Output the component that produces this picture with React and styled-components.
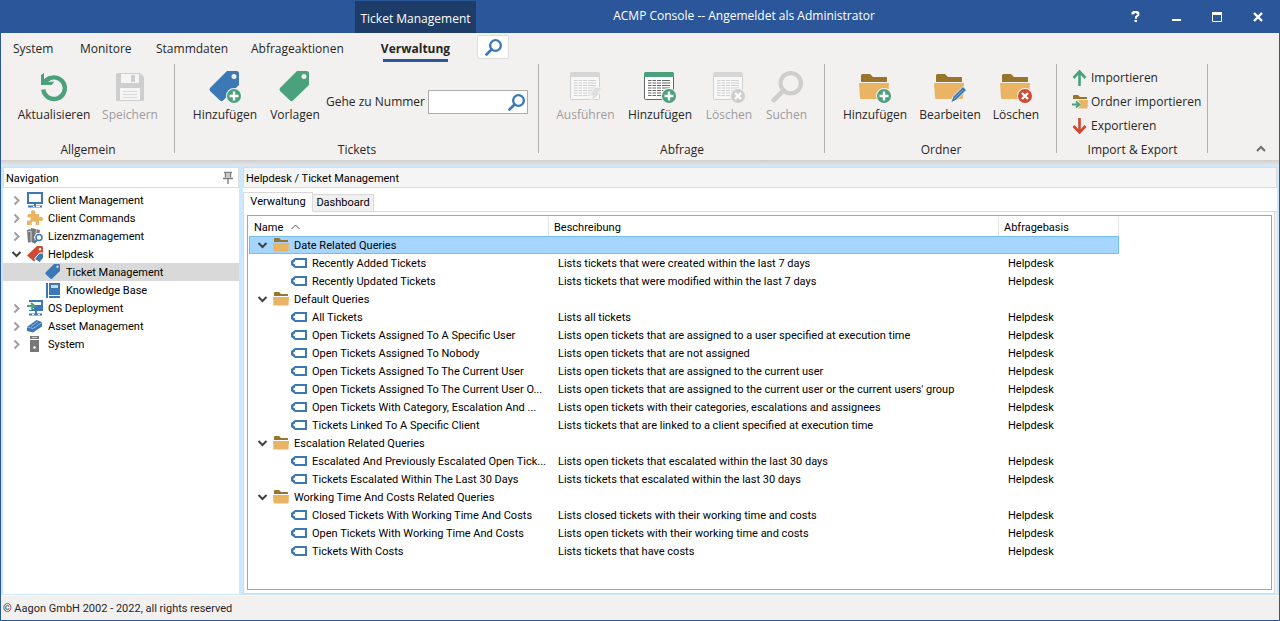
import React from "react";
import styled, { createGlobalStyle, css } from "styled-components";

const ui = `"Open Sans", "Noto Sans", sans-serif`;
const list = `Roboto, "Open Sans", sans-serif`;

const C = {
  title: "#2b579a",
  titleDark: "#1e3c68",
  chrome: "#f3f1f0",
  blue: "#3c77b6",
  green: "#4ba17c",
  red: "#cf4a30",
  folder: "#e9b564",
  folderDark: "#98752a",
  gray: "#cecece",
  text: "#262626",
};

const Global = createGlobalStyle`
  * { box-sizing: border-box; }
  html, body { margin: 0; padding: 0; }
  body { font: 12px/16px ${ui}; color: ${C.text}; background: #fff; }
  button { font: inherit; color: inherit; background: none; border: 0; padding: 0; margin: 0; }
  ul { list-style: none; margin: 0; padding: 0; }
  svg { display: block; flex: none; }
`;

const Window = styled.div`
  min-height: 100vh;
  display: flex;
  flex-direction: column;
  border: solid ${C.title};
  border-width: 0 1px 1px;
`;

/* Title bar */
const TitleBar = styled.header`
  height: 33px;
  flex: none;
  display: flex;
  align-items: flex-end;
  background: ${C.title};
  color: #fff;
  padding-left: 354px;
`;
const ContextTab = styled.div`
  width: 121px;
  height: 32px;
  background: ${C.titleDark};
  text-align: center;
  line-height: 36px;
`;
const WindowTitle = styled.h1`
  flex: 1;
  margin: 0;
  padding-right: 103px;
  font-size: 12px;
  font-weight: 400;
  line-height: 34px;
  text-align: center;
`;
const CaptionButton = styled.button`
  width: 41px;
  height: 33px;
  display: flex;
  align-items: center;
  justify-content: center;
`;

/* Ribbon */
const Ribbon = styled.div`
  flex: none;
  background: ${C.chrome};
`;
const MenuTabs = styled.nav`
  height: 31px;
  display: flex;
  padding-left: 12px;
`;
const MenuTab = styled.button`
  height: 29px;
  width: ${(p) => p.$width}px;
  text-align: left;
  padding-top: 2px;
  white-space: nowrap;
  ${(p) =>
    p.$active &&
    css`
      font-weight: 700;
      border-bottom: 3px solid ${C.title};
      padding-top: 5px;
      display: flex;
      align-items: center;
      justify-content: center;
    `}
`;
const SearchButton = styled.button`
  width: 32px;
  height: 24px;
  margin: 2px 0 0 29px;
  display: flex;
  align-items: center;
  justify-content: center;
  background: #fff;
  border: 1px solid #dedede;
  border-radius: 2px;
`;
const Groups = styled.div`
  height: 96px;
  display: flex;
`;
const Group = styled.section`
  width: ${(p) => p.$width}px;
  height: 94px;
  padding: 7px 10px 0 11px;
  display: flex;
  flex-direction: column;
  justify-content: space-between;
`;
const GroupRule = styled.div`
  width: 1px;
  height: 89px;
  background: #b3b1b0;
`;
const GroupBody = styled.div`
  display: flex;
`;
const GroupName = styled.div`
  text-align: center;
`;
const BigButton = styled.button`
  width: ${(p) => p.$width}px;
  display: flex;
  flex-direction: column;
  align-items: center;
  gap: 4px;
  white-space: nowrap;
  &:disabled { color: #9c9c9c; }
`;
const NumberField = styled.div`
  display: flex;
  align-items: center;
  margin-top: 10px;
  flex: 1;
  justify-content: flex-end;
  gap: 3px;
  white-space: nowrap;
`;
const NumberBox = styled.div`
  width: 100px;
  height: 24px;
  display: flex;
  align-items: center;
  background: #fff;
  border: 1px solid #acacac;
  padding-right: 2px;
  input {
    flex: 1;
    min-width: 0;
    height: 22px;
    border: 0;
    outline: 0;
    background: transparent;
    font: inherit;
    padding: 0 4px;
  }
`;
const SmallList = styled.div`
  display: flex;
  flex-direction: column;
  padding-left: 4px;
`;
const SmallButton = styled.button`
  height: 24px;
  display: flex;
  align-items: center;
  gap: 3px;
  white-space: nowrap;
`;
const SmallGroup = styled(Group)`
  padding-top: 2px;
`;
const CollapseButton = styled.button`
  margin: 0 13px 7px auto;
  align-self: flex-end;
`;
const RibbonShadow = styled.div`
  height: 5px;
  flex: none;
  background: linear-gradient(#cfcfcf, #e4e4e4);
`;

/* Work area */
const Work = styled.main`
  flex: 1;
  display: flex;
  padding: 2px 2px 1px 2px;
  background: #cce8ff;
`;
const NavPane = styled.aside`
  width: 236px;
  flex: none;
  background: #fff;
  margin-right: 4px;
`;
const PaneHeader = styled.h2`
  height: 21px;
  margin: 0;
  padding: 0 4px 0 2px;
  display: flex;
  align-items: center;
  justify-content: space-between;
  border: 1px solid #dcdcdc;
  background: ${(p) => (p.$tinted ? "#f5f5f5" : "#fff")};
  font: 400 11px/18px ${list};
  color: #000;
`;
const Tree = styled.ul`
  padding-top: 3px;
`;
const TreeItem = styled.button`
  width: 100%;
  height: 18px;
  display: flex;
  align-items: center;
  gap: 5px;
  padding-left: ${(p) => (p.$child ? 42 : 8)}px;
  background: ${(p) => (p.$selected ? "#d9d9d9" : "none")};
  font: 11px/18px ${list};
  color: #000;
`;
const Twist = styled.span`
  width: 11px;
  display: flex;
  justify-content: center;
`;
const Content = styled.section`
  flex: 1;
  min-width: 0;
  display: flex;
  flex-direction: column;
  background: #fff;
`;
const TabStrip = styled.div`
  height: 24px;
  display: flex;
  align-items: flex-end;
  padding-top: 4px;
`;
const Tab = styled.button`
  width: ${(p) => (p.$active ? 70 : 61)}px;
  height: ${(p) => (p.$active ? 20 : 18)}px;
  border: 1px solid #d9d9d9;
  border-bottom-color: ${(p) => (p.$active ? "#fff" : "#d9d9d9")};
  border-left-width: ${(p) => (p.$active ? 1 : 0)}px;
  background: ${(p) => (p.$active ? "#fff" : "#f0f0f0")};
  font: 11px/16px ${list};
  color: #000;
`;
const TabRest = styled.div`
  flex: 1;
  border-bottom: 1px solid #d9d9d9;
`;
const TabPage = styled.div`
  flex: 1;
  display: flex;
  margin-right: 2px;
  padding: 3px 2px 3px 3px;
  border: solid #d9d9d9;
  border-width: 0 1px 1px 1px;
  box-shadow: 2px 0 0 #f0f0f0;
`;
const GridFrame = styled.div`
  flex: 1;
  padding: 1px;
  border: 1px solid #a3a3a8;
`;
const Grid = styled.table`
  width: 870px;
  table-layout: fixed;
  border-collapse: separate;
  border-spacing: 0;
  font: 11px/18px ${list};
  color: #000;
  white-space: nowrap;
`;
const HeadCell = styled.th`
  height: 19px;
  padding: 0 5px;
  font-weight: 400;
  text-align: left;
  border-right: 1px solid #e3e3e3;
`;
const HeadLabel = styled.span`
  display: flex;
  align-items: center;
  gap: 8px;
`;
const Label = styled.span`
  display: block;
  height: 18px;
  line-height: 20px;
`;
const Cell = styled.td`
  height: 18px;
  padding: 0 0 0 9px;
`;
const NameCell = styled(Cell)`
  padding-left: 42px;
`;
const GroupCell = styled(Cell)`
  padding-left: 8px;
  background: ${(p) => (p.$selected ? "#a6d6ff" : "none")};
  box-shadow: ${(p) => (p.$selected ? "inset 0 0 0 1px #74bdf5" : "none")};
`;
const Line = styled.div`
  height: 18px;
  display: flex;
  align-items: center;
  gap: 5px;
`;
const StatusBar = styled.footer`
  height: 25px;
  flex: none;
  padding: 1px 2px 0;
  border-top: 1px solid #fff;
  background: ${C.chrome};
  font: 11px/24px ${list};
`;

/* Icons */
const Svg = ({ s = 32, h, children, v }) => (
  <svg width={s} height={h || s} viewBox={v || `0 0 ${s} ${h || s}`} fill="none" aria-hidden="true">
    {children}
  </svg>
);
const Badge = ({ color = C.green, cross, halo = C.chrome }) => (
  <>
    <circle cx="25" cy="25" r="8" fill={halo} />
    <circle cx="25" cy="25" r="7" fill={color} />
    <path d={cross ? "M22 22l6 6M28 22l-6 6" : "M25 20.500v9M20.500 25h9"} stroke="#fff" strokeWidth="2.400" />
  </>
);
const RefreshIcon = () => (
  <Svg>
    <path d="M5.300 18.500A10.800 10.800 0 1 0 9 9" stroke={C.green} strokeWidth="4.400" />
    <path d="M3 4L6 2v6l5-3 2 3-3 3 6.500-.5-3 3.500H3z" fill={C.green} />
  </Svg>
);
const SaveIcon = () => (
  <Svg>
    <path d="M2 3.500Q2 2 3.500 2H26l4 4v22.500Q30 30 28.500 30h-25Q2 30 2 28.500z" fill={C.gray} />
    <path d="M7 3h18v9H7z" fill="#f5f5f5" />
    <path d="M17 4h4v7h-4z" fill={C.gray} />
    <path d="M6 17h20v12H6z" fill="#f5f5f5" />
    <path d="M9 20.500h14M9 23.500h14M9 26.500h14" stroke="#dadada" />
  </Svg>
);
const TagIcon = ({ color, badge, small }) => (
  <Svg s={small ? 16 : 32} v="0 0 32 32">
    <path
      fillRule="evenodd"
      d="M18 0h9.500Q30 0 30 2.500V14L14 29.500Q12 31 10.500 29L1 20Q0 18.500 1 17zM25 3a2.500 2.500 0 1 0 0 5 2.500 2.500 0 0 0 0-5z"
      fill={color}
    />
    {badge && <Badge />}
  </Svg>
);
const Magnifier = ({ s = 17, color = C.blue, w = 3 }) => (
  <Svg s={s} v="0 0 17 17">
    <circle cx="10.500" cy="6.500" r={6.500 - w / 2} stroke={color} strokeWidth={w} />
    <path d="M6.500 10.500L1.500 15.500" stroke={color} strokeWidth={w + 0.3} strokeLinecap="round" />
  </Svg>
);
const SheetIcon = ({ off, kind }) => {
  const line = off ? "#d0d0d0" : "#666";
  const rows = [0, 1, 2, 3, 4, 5, 6].map((i) => `M4 ${9.5 + i * 2.5}h3.500M8.500 ${9.5 + i * 2.5}h3.500M13 ${9.5 + i * 2.5}h4M18 ${9.5 + i * 2.5}h8`).join("");
  return (
    <Svg>
      <path d="M.5 4.500h29v23a1 1 0 0 1-1 1h-27a1 1 0 0 1-1-1z" fill={off ? "#f7f7f7" : "#fff"} stroke={line} />
      <path d="M0 6V2.500Q0 1 1.500 1h27Q30 1 30 2.500V6z" fill={off ? "#d6d6d6" : C.green} />
      <path d={rows} stroke={line} strokeWidth="1.200" />
      {kind === "run" && (
        <path d="M24.500 16.500H32l-4 5h3L19.500 31.500l3.500-7h-3.500z" fill="#dfdfdf" stroke={C.chrome} />
      )}
      {kind === "add" && <Badge />}
      {kind === "del" && <Badge cross color={C.gray} />}
    </Svg>
  );
};
const FolderIcon = ({ kind }) => (
  <Svg>
    <path d="M2 11V4.500Q2 3 3.500 3H11l3 3h13.500Q28 6 28 7v4z" fill={C.folderDark} />
    <path d="M0 12h30l-1 15.500q0 .5-1.500.5h-25Q1 28 1 27z" fill={C.folder} />
    {kind === "add" && <Badge />}
    {kind === "del" && <Badge cross color={C.red} />}
    {kind === "edit" && (
      <>
        <path d="M16.500 32l2.500-6.500L29 15.500l3.500 3.500-10 10z" fill={C.blue} stroke={C.chrome} />
        <path d="M20 28L29 19" stroke="#7fa6d2" />
      </>
    )}
  </Svg>
);
const FolderSmall = ({ arrow }) => (
  <Svg s={16}>
    <path d="M1 5V2q0-1 1-1h4l2 2h6.500q.5 0 .5.500V5z" fill={C.folderDark} />
    <path d="M0 6h16l-.5 8.500H.5z" fill={C.folder} />
    {arrow && (
      <>
        <path d="M0 6h6l3 4.500L6 15H0z" fill={C.chrome} />
        <path d="M0 10.500h7M4 7.500l3.500 3L4 13.500" stroke={C.green} strokeWidth="2" />
      </>
    )}
  </Svg>
);
const ArrowIcon = ({ down }) => (
  <Svg s={16}>
    <path
      d={down ? "M7.500 0v14M1.500 8l6 6.500 6-6.500" : "M7.500 16V2M1.500 8l6-6.500 6 6.500"}
      stroke={down ? C.red : C.green}
      strokeWidth="2.600"
    />
  </Svg>
);
const Chevron = ({ open }) =>
  open ? (
    <Svg s={11}><path d="M1.500 3l4 4 4-4" stroke="#404040" strokeWidth="2" /></Svg>
  ) : (
    <Svg s={11}><path d="M3.500 1.500l4 4-4 4" stroke="#a0a0a0" strokeWidth="2" /></Svg>
  );
const PinIcon = () => (
  <Svg s={12} h={14}>
    <path d="M2 1.500h8M3.500 2v4.500M8.500 2v4.500M1 7.500h10M6 8v5" stroke="#808080" strokeWidth="1.400" />
    <path d="M4 2h4v5H4z" fill="#c8c8c8" />
  </Svg>
);
const QueryIcon = () => (
  <Svg s={16} h={10}>
    <path d="M4.500 1H15v8H4.500L1 6.500v-3z" fill="#fff" stroke={C.blue} strokeWidth="2" />
    <path d="M0 5l4-5v10z" fill={C.blue} />
    <circle cx="3.500" cy="5" r="1.200" fill="#fff" />
  </Svg>
);
const MonitorIcon = () => (
  <Svg s={16}>
    <path d="M1 1h14v10H1zM1 14.500h14M8 11v3" stroke={C.blue} strokeWidth="2" />
    <path d="M7 12h2v2H7z" fill={C.blue} />
    <path d="M6 14.500h1.500M9 14.500h4" stroke="#fff" />
  </Svg>
);
const PuzzleIcon = () => (
  <Svg s={16}>
    <path d="M1 4h3.500C3 1 5 .3 6.200.3S9.500 1 8 4h4v3.500c3-1.200 4 0 4 1.500s-1 2.700-4 1.500V15H8.500c1-3-.5-3.500-1.800-3.500S4 12 5 15H0v-4.500c3 .8 3.700-.4 3.700-1.500S3 6.700 0 7.500z" fill={C.folder} />
  </Svg>
);
const LicenseIcon = () => (
  <Svg s={16}>
    <path d="M0 2l3-1 1 1V0l9 2-.5 3H9L7 9l1 3-1 3-3-1-1 .5H1z" fill="#787878" />
    <path d="M1 4l2.500-1M4 3v11M9.500 1.500L9 5" stroke="#fff" strokeWidth=".7" />
    <circle cx="12" cy="9.500" r="3" fill="#fff" stroke={C.blue} strokeWidth="1.500" />
    <path d="M10 12l-3 3" stroke={C.blue} strokeWidth="2" />
  </Svg>
);
const HelpdeskIcon = () => (
  <Svg s={16}>
    <path fillRule="evenodd" d="M10 0h4.500Q16 0 16 1.500V7L7 15.500 0 9.500zM13 2a1.300 1.300 0 1 0 0 2.600A1.300 1.300 0 0 0 13 2z" fill={C.red} />
    <path d="M12.500 7H16.500v5l-4 4.500-5-3.500z" fill={C.blue} stroke="#fff" />
  </Svg>
);
const BookIcon = () => (
  <Svg s={16}>
    <path d="M1 1h2v15H1zM4 1h11v12H4zM4 14h11v2H4z" fill={C.blue} />
    <path d="M6 3h7v3H6z" fill="#c8dcf0" />
  </Svg>
);
const DeployIcon = () => (
  <Svg s={16}>
    <path d="M3 1h12v9H3zM2 14.500h13M9 10v4" stroke={C.blue} strokeWidth="2" />
    <path d="M7 5h8v5H7z" fill={C.blue} />
    <path d="M0 2h5v8H0z" fill="#fff" />
    <path d="M0 6h7M4 3l3.500 3L4 9" stroke={C.green} strokeWidth="2" />
    <path d="M5 14.500h2M11 14.500h2" stroke="#fff" />
  </Svg>
);
const AssetIcon = () => (
  <Svg s={16}>
    <path d="M0 9l9.500-7L15 4v4.500L6 14.500 0 13z" fill={C.blue} />
    <path d="M0 9l6 1.500L15 4.500M4 8.500l7-5" stroke="#a9c6e4" strokeWidth=".8" />
  </Svg>
);
const ServerIcon = () => (
  <Svg s={16}>
    <path d="M3 0h9v3H3zM3 4h9v12H3z" fill="#787878" />
    <path d="M5 1.500h5" stroke="#ccc" />
    <circle cx="7.500" cy="11.500" r="1.300" fill="#fff" />
  </Svg>
);

const MENU = [["System", 67], ["Monitore", 76], ["Stammdaten", 95], ["Abfrageaktionen", 132]];

const NAV = [
  ["Client Management", MonitorIcon],
  ["Client Commands", PuzzleIcon],
  ["Lizenzmanagement", LicenseIcon],
  ["Helpdesk", HelpdeskIcon, "open"],
  ["Ticket Management", () => <TagIcon small color={C.blue} />, "child", true],
  ["Knowledge Base", BookIcon, "child"],
  ["OS Deployment", DeployIcon],
  ["Asset Management", AssetIcon],
  ["System", ServerIcon],
];

const QUERIES = [
  ["Date Related Queries", [
    ["Recently Added Tickets", "Lists tickets that were created within the last 7 days"],
    ["Recently Updated Tickets", "Lists tickets that were modified within the last 7 days"],
  ]],
  ["Default Queries", [
    ["All Tickets", "Lists all tickets"],
    ["Open Tickets Assigned To A Specific User", "Lists open tickets that are assigned to a user specified at execution time"],
    ["Open Tickets Assigned To Nobody", "Lists open tickets that are not assigned"],
    ["Open Tickets Assigned To The Current User", "Lists open tickets that are assigned to the current user"],
    ["Open Tickets Assigned To The Current User O...", "Lists open tickets that are assigned to the current user or the current users' group"],
    ["Open Tickets With Category, Escalation And ...", "Lists open tickets with their categories, escalations and assignees"],
    ["Tickets Linked To A Specific Client", "Lists tickets that are linked to a client specified at execution time"],
  ]],
  ["Escalation Related Queries", [
    ["Escalated And Previously Escalated Open Tick...", "Lists open tickets that escalated within the last 30 days"],
    ["Tickets Escalated Within The Last 30 Days", "Lists tickets that escalated within the last 30 days"],
  ]],
  ["Working Time And Costs Related Queries", [
    ["Closed Tickets With Working Time And Costs", "Lists closed tickets with their working time and costs"],
    ["Open Tickets With Working Time And Costs", "Lists open tickets with their working time and costs"],
    ["Tickets With Costs", "Lists tickets that have costs"],
  ]],
];

const Big = ({ label, width, icon, disabled }) => (
  <BigButton $width={width} disabled={disabled}>
    {icon}
    {label}
  </BigButton>
);

export default function App() {
  return (
    <Window>
      <Global />
      <TitleBar>
        <ContextTab>Ticket Management</ContextTab>
        <WindowTitle>ACMP Console -- Angemeldet als Administrator</WindowTitle>
        <CaptionButton aria-label="Hilfe">
          <Svg s={11}>
            <path d="M2.500 3.500V2h1.200V1h3.600v1h1V4L6 6v1.800" stroke="#fff" strokeWidth="2" />
            <path d="M4.500 9h2.500v2H4.500z" fill="#fff" />
          </Svg>
        </CaptionButton>
        <CaptionButton aria-label="Minimieren">
          <Svg s={11}><path d="M1 8h9v2H1z" fill="#fff" /></Svg>
        </CaptionButton>
        <CaptionButton aria-label="Maximieren">
          <Svg s={11}><path d="M.5 1.500h9v9h-9z" stroke="#fff" /><path d="M0 1h10v3H0z" fill="#fff" /></Svg>
        </CaptionButton>
        <CaptionButton aria-label="Schließen">
          <Svg s={11}><path d="M1 2l8 8M9 2L1 10" stroke="#fff" strokeWidth="2.400" /></Svg>
        </CaptionButton>
      </TitleBar>

      <Ribbon>
        <MenuTabs>
          {MENU.map(([label, width]) => (
            <MenuTab key={label} $width={width}>{label}</MenuTab>
          ))}
          <MenuTab $width={65} $active>Verwaltung</MenuTab>
          <SearchButton aria-label="Suche"><Magnifier s={17} w={2.3} /></SearchButton>
        </MenuTabs>
        <Groups>
          <Group $width={173}>
            <GroupBody>
              <Big label="Aktualisieren" width={84} icon={<RefreshIcon />} />
              <Big label="Speichern" width={68} icon={<SaveIcon />} disabled />
            </GroupBody>
            <GroupName>Allgemein</GroupName>
          </Group>
          <GroupRule />
          <Group $width={363}>
            <GroupBody>
              <Big label="Hinzufügen" width={78} icon={<TagIcon color={C.blue} badge />} />
              <Big label="Vorlagen" width={62} icon={<TagIcon color={C.green} />} />
              <NumberField>
                <label htmlFor="ticket-number">Gehe zu Nummer</label>
                <NumberBox>
                  <input id="ticket-number" type="text" />
                  <button aria-label="Ticket suchen"><Magnifier s={17} w={2.3} /></button>
                </NumberBox>
              </NumberField>
            </GroupBody>
            <GroupName>Tickets</GroupName>
          </Group>
          <GroupRule />
          <Group $width={285}>
            <GroupBody>
              <Big label="Ausführen" width={71} icon={<SheetIcon off kind="run" />} disabled />
              <Big label="Hinzufügen" width={78} icon={<SheetIcon kind="add" />} />
              <Big label="Löschen" width={60} icon={<SheetIcon off kind="del" />} disabled />
              <Big label="Suchen" width={55} icon={<Magnifier s={32} color={C.gray} w={2.2} />} disabled />
            </GroupBody>
            <GroupName>Abfrage</GroupName>
          </Group>
          <GroupRule />
          <Group $width={231}>
            <GroupBody>
              <Big label="Hinzufügen" width={78} icon={<FolderIcon kind="add" />} />
              <Big label="Bearbeiten" width={72} icon={<FolderIcon kind="edit" />} />
              <Big label="Löschen" width={60} icon={<FolderIcon kind="del" />} />
            </GroupBody>
            <GroupName>Ordner</GroupName>
          </Group>
          <GroupRule />
          <SmallGroup $width={150}>
            <SmallList>
              <SmallButton><ArrowIcon />Importieren</SmallButton>
              <SmallButton><FolderSmall arrow />Ordner importieren</SmallButton>
              <SmallButton><ArrowIcon down />Exportieren</SmallButton>
            </SmallList>
            <GroupName>Import &amp; Export</GroupName>
          </SmallGroup>
          <GroupRule />
          <CollapseButton aria-label="Menüband reduzieren">
            <Svg s={10} h={8}><path d="M1 6l4-4 4 4" stroke="#6e6e6e" strokeWidth="2" /></Svg>
          </CollapseButton>
        </Groups>
      </Ribbon>
      <RibbonShadow />

      <Work>
        <NavPane>
          <PaneHeader><Label>Navigation</Label><PinIcon /></PaneHeader>
          <Tree>
            {NAV.map(([label, Icon, kind, selected]) => (
              <li key={label}>
                <TreeItem $child={kind === "child"} $selected={selected}>
                  {kind !== "child" && <Twist><Chevron open={kind === "open"} /></Twist>}
                  <Icon />
                  <Label>{label}</Label>
                </TreeItem>
              </li>
            ))}
          </Tree>
        </NavPane>
        <Content>
          <PaneHeader $tinted><Label>Helpdesk / Ticket Management</Label></PaneHeader>
          <TabStrip>
            <Tab $active>Verwaltung</Tab>
            <Tab>Dashboard</Tab>
            <TabRest />
          </TabStrip>
          <TabPage>
            <GridFrame>
              <Grid>
                <colgroup>
                  <col width="300" />
                  <col width="450" />
                  <col width="120" />
                </colgroup>
                <thead>
                  <tr>
                    <HeadCell>
                      <HeadLabel>
                        <Label>Name</Label>
                        <Svg s={9} h={6}><path d="M.5 5l4-4 4 4" stroke="#555" /></Svg>
                      </HeadLabel>
                    </HeadCell>
                    <HeadCell><Label>Beschreibung</Label></HeadCell>
                    <HeadCell><Label>Abfragebasis</Label></HeadCell>
                  </tr>
                </thead>
                {QUERIES.map(([group, rows], i) => (
                  <tbody key={group}>
                    <tr>
                      <GroupCell colSpan={3} $selected={i === 0}>
                        <Line><Chevron open /><FolderSmall /><Label>{group}</Label></Line>
                      </GroupCell>
                    </tr>
                    {rows.map(([name, text]) => (
                      <tr key={name}>
                        <NameCell><Line><QueryIcon /><Label>{name}</Label></Line></NameCell>
                        <Cell><Label>{text}</Label></Cell>
                        <Cell><Label>Helpdesk</Label></Cell>
                      </tr>
                    ))}
                  </tbody>
                ))}
              </Grid>
            </GridFrame>
          </TabPage>
        </Content>
      </Work>
      <StatusBar>© Aagon GmbH 2002 - 2022, all rights reserved</StatusBar>
    </Window>
  );
}
